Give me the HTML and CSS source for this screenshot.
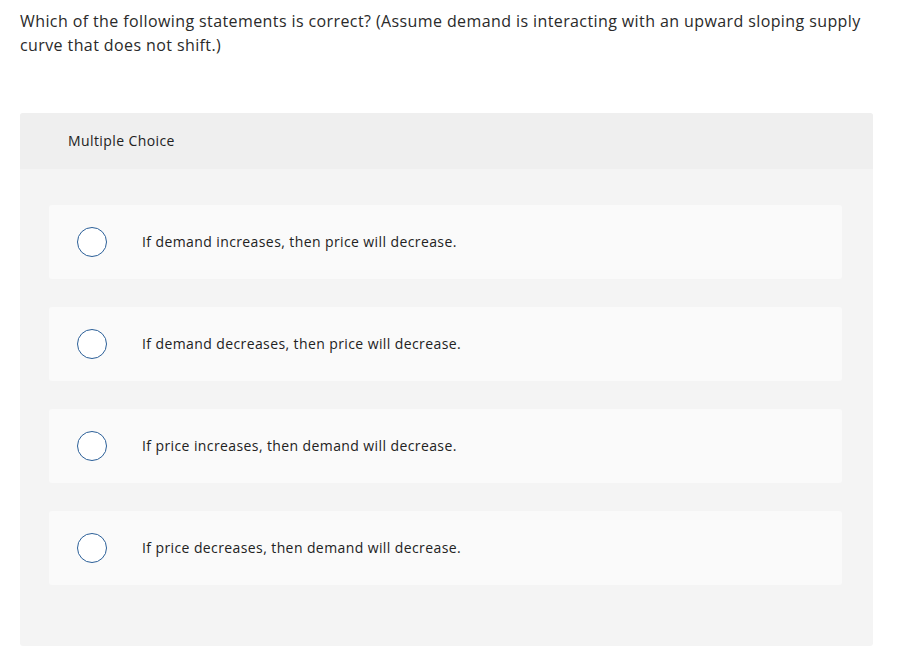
FILE: index.html
```html
<!DOCTYPE html>
<html>
<head>
<meta charset="utf-8">
<link rel="stylesheet" href="styles.css">
</head>
<body>
<div class="page">
  <p class="question">Which of the following statements is correct? (Assume demand is interacting with an upward sloping supply curve that does not shift.)</p>
  <div class="card">
    <div class="card-header">Multiple Choice</div>
    <div class="card-body">
      <div class="option"><span class="radio"></span><span class="label">If demand increases, then price will decrease.</span></div>
      <div class="option"><span class="radio"></span><span class="label">If demand decreases, then price will decrease.</span></div>
      <div class="option"><span class="radio"></span><span class="label">If price increases, then demand will decrease.</span></div>
      <div class="option"><span class="radio"></span><span class="label">If price decreases, then demand will decrease.</span></div>
    </div>
  </div>
</div>
</body>
</html>
```

FILE: styles.css
```css
html, body {
  margin: 0;
  padding: 0;
  background: #ffffff;
}
body {
  font-family: "Open Sans", "Liberation Sans", sans-serif;
  color: #222222;
  letter-spacing: 0.4px;
}
.page {
  padding: 9px 35px 0 20px;
}
.question {
  margin: 0;
  font-size: 16px;
  line-height: 24px;
  color: #2a2a2a;
}
.card {
  margin-top: 56px;
  width: 853px;
  background: #f4f4f4;
  border-radius: 3px;
  overflow: hidden;
}
.card-header {
  height: 56px;
  box-sizing: border-box;
  background: #efefef;
  padding-left: 48px;
  padding-bottom: 1px;
  display: flex;
  align-items: center;
  font-size: 14px;
  color: #222222;
}
.card-body {
  padding: 36px 31px 61px 29px;
  display: flex;
  flex-direction: column;
  gap: 28px;
}
.option {
  height: 74px;
  background: #fafafa;
  border-radius: 3px;
  display: flex;
  align-items: center;
  padding-left: 28px;
}
.radio {
  width: 28px;
  height: 28px;
  border: 1.5px solid #2b5f98;
  border-radius: 50%;
  background: #ffffff;
  flex: none;
}
.label {
  margin-left: 35px;
  padding-bottom: 1px;
  font-size: 14px;
  color: #222222;
}
```
